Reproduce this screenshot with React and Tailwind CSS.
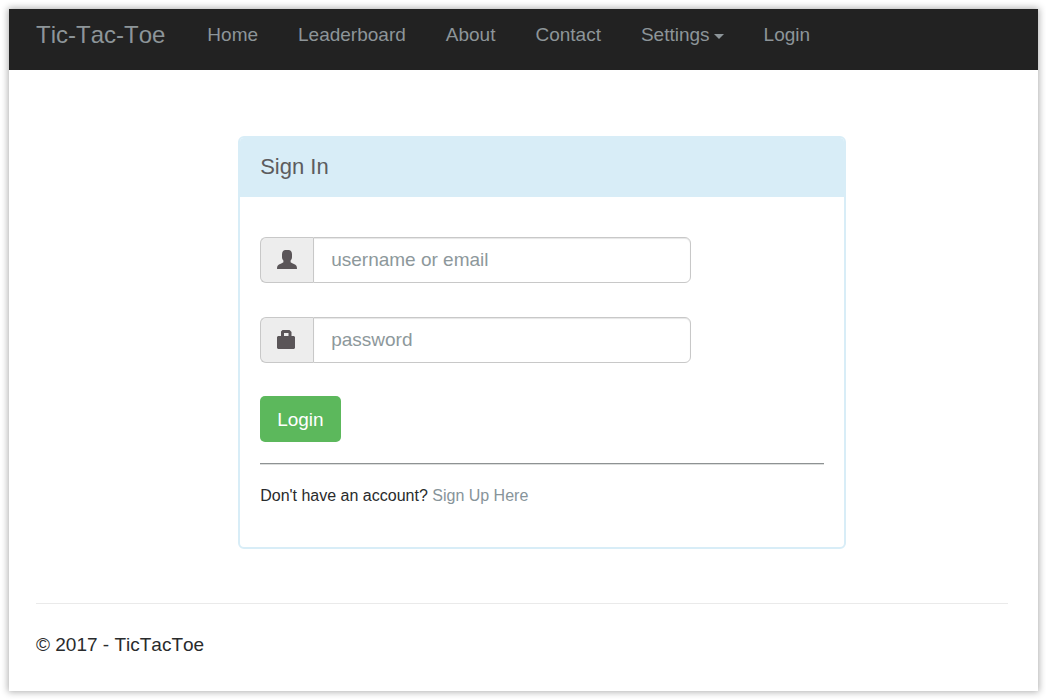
const linkClass = "flex items-center text-[19px] leading-7 text-[#8d9599] hover:text-white";

function UserIcon() {
  return (
    <svg width="20" height="19" viewBox="0 0 20 19" fill="#5a5558" aria-hidden="true">
      <path d="M8 0H12C14 .5 15 2 15 4.500V7C15 8.500 14.500 9.600 13.600 10.500V12.300C14 12.800 14.700 13 15.300 13.300L18 14.600C19.400 15.400 20 16.500 20 19H0C0 16.500 .6 15.400 2 14.600L4.700 13.300C5.300 13 6 12.800 6.400 12.300V10.500C5.500 9.600 5 8.500 5 7V4.500C5 2 6 .5 8 0Z" />
    </svg>
  );
}

function LockIcon() {
  return (
    <svg width="18" height="19" viewBox="0 0 18 19" fill="#5a5558" aria-hidden="true">
      <path
        fillRule="evenodd"
        d="M5.500 0H12.500L14.500 2V6H17L18 7V18L17 19H1L0 18V7L1 6H4V1.500ZM7 3V6H11.500V3Z"
      />
    </svg>
  );
}

function Field({ id, label, type, icon }) {
  return (
    <div className="flex h-[46px] w-[76.3%]">
      <label
        htmlFor={id}
        className="flex w-[53px] shrink-0 items-center rounded-l-md border border-r-0 border-[#c8c8c8] bg-[#ededed] pb-0.5 pl-4"
      >
        {icon}
      </label>
      <input
        id={id}
        name={id}
        type={type}
        placeholder={label}
        aria-label={label}
        className="min-w-0 flex-1 rounded-r-md border border-[#c8c8c8] bg-white px-[17px] text-[19px] text-[#555] shadow-[inset_0_1px_1px_rgba(0,0,0,0.1)] outline-none placeholder:text-[#8d989b] focus:border-[#66afe9]"
      />
    </div>
  );
}

export default function App() {
  return (
    <div className="bg-white p-2 pt-[9px] pl-[9px] font-['Liberation_Sans',Arial,sans-serif] text-[#292b2c] [font-kerning:none]">
      <div className="bg-white shadow-[0_0_7px_1px_rgba(0,0,0,0.32)]">
        <nav className="flex min-h-[61px] flex-wrap items-start gap-x-10 bg-[#222] px-[27px] pt-3">
          <a href="#" className="pr-0.5 text-2xl leading-7 text-[#8d9599] hover:text-white">
            Tic-Tac-Toe
          </a>
          <a href="#" className={linkClass}>Home</a>
          <a href="#" className={linkClass}>Leaderboard</a>
          <a href="#" className={linkClass}>About</a>
          <a href="#" className={linkClass}>Contact</a>
          <button type="button" aria-haspopup="true" className={linkClass}>
            Settings
            <svg width="10" height="5" viewBox="0 0 10 5" fill="currentColor" className="ml-1 mt-0.5" aria-hidden="true">
              <path d="M0 0H10L5 5Z" />
            </svg>
          </button>
          <a href="#" className={linkClass}>Login</a>
        </nav>

        <div className="pl-[27px] pr-[30px]">
          <main className="pt-[66px] pb-[54px] pl-[20.8%]">
            <section className="w-[79%] overflow-hidden rounded-md border-2 border-[#d8edf7]">
              <header className="bg-[#d8edf7] px-5 pt-[15px] pb-4">
                <h1 className="text-[22px] leading-7 text-[#5c5c5e]">Sign In</h1>
              </header>
              <div className="px-5 pt-10 pb-[39px]">
                <form onSubmit={(e) => e.preventDefault()}>
                  <div className="flex flex-col gap-[34px]">
                    <Field id="username" label="username or email" type="text" icon={<UserIcon />} />
                    <Field id="password" label="password" type="password" icon={<LockIcon />} />
                  </div>
                  <button
                    type="submit"
                    className="mt-[33px] block h-[46px] rounded-[5px] bg-[#5cb85c] px-[17px] pt-0.5 text-[19px] leading-7 text-white hover:bg-[#449d44]"
                  >
                    Login
                  </button>
                </form>
                <div className="mt-[21px] border-t border-[#8e9293] pt-5 leading-6 shadow-[inset_0_1px_0_#dcdedd]">
                  Don't have an account?{" "}
                  <a href="#" className="text-[#87949a] hover:underline">Sign Up Here</a>
                </div>
              </div>
            </section>
          </main>
          <footer className="border-t border-[#eaeaea] pt-[27px] pb-8 text-[19px] leading-7">
            © 2017 - TicTacToe
          </footer>
        </div>
      </div>
    </div>
  );
}
